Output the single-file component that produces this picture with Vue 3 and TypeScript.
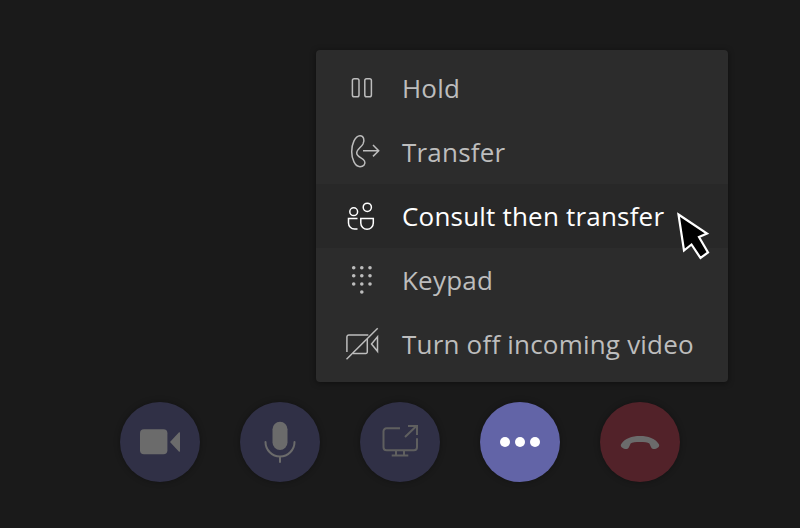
<script setup lang="ts">
const items = [
  { key: 'hold', label: 'Hold' },
  { key: 'transfer', label: 'Transfer' },
  { key: 'consult', label: 'Consult then transfer', active: true },
  { key: 'keypad', label: 'Keypad' },
  { key: 'video', label: 'Turn off incoming video' },
]
const dots: [number, number][] = [
  [11.7, 7.7], [19.8, 7.7], [28, 7.7],
  [11.7, 15.8], [19.8, 15.8], [28, 15.8],
  [11.7, 24], [19.8, 24], [28, 24],
  [19.8, 32],
]
</script>

<template>
  <div class="page">
    <div class="menu">
      <div v-for="it in items" :key="it.key" class="row" :class="{ active: it.active }">
        <svg class="icon" width="40" height="40" viewBox="0 0 40 40" fill="none" stroke="currentColor" stroke-width="1.5">
          <template v-if="it.key === 'hold'">
            <rect x="10.4" y="10.700" width="6.600" height="18" rx="1.800" />
            <rect x="22.800" y="10.700" width="6.600" height="18" rx="1.800" />
          </template>
          <template v-else-if="it.key === 'transfer'">
            <path d="M18 3.700C13 4 9.700 12 9.700 19.700 9.700 27 13 34.700 18 34.700 21.500 34.700 24 32 22.500 29 21 26 14.700 25 14.700 21 14.700 17 19 15.500 21 12 23 8 21.500 3.500 18 3.700z" />
            <path d="M21 18.700h15M31 13l5.700 5.700-5.700 5.700" />
          </template>
          <template v-else-if="it.key === 'consult'">
            <circle cx="11.700" cy="15.700" r="3.900" />
            <circle cx="25.300" cy="11.300" r="4.100" />
            <path d="M15.500 22.500H6.500V27a6 6 0 0 0 6 6h3" />
            <path d="M18.800 22.500h12.500V27a6.250 6.250 0 0 1-12.500 0z" />
          </template>
          <template v-else-if="it.key === 'keypad'">
            <circle v-for="(d, i) in dots" :key="i" :cx="d[0]" :cy="d[1]" r="1.800" fill="currentColor" stroke="none" />
          </template>
          <template v-else>
            <path d="M4.900 28V13a2 2 0 0 1 2-2h19.400M25.300 15v13a1.500 1.500 0 0 1-1.500 1.500H11" />
            <path d="M35.500 12.800v14.500L29.500 20z" />
            <path d="M4.500 35.200L35.700 4.300" />
          </template>
        </svg>
        <span class="label">{{ it.label }}</span>
      </div>
    </div>

    <svg class="cursor" width="38" height="50" viewBox="0 0 38 50">
      <path d="M3.500 3.500L32 22.500 24 26 33 41.500 25.500 47 16.500 33.500 9 39.500z" fill="#000" stroke="#fff" stroke-width="2.200" stroke-linejoin="miter" />
    </svg>

    <div class="controls">
      <button class="btn">
        <svg width="44" height="30" viewBox="0 0 44 30" fill="#6b6b6b">
          <rect x="2" y="2.300" width="27.400" height="25" rx="4" />
          <path d="M32 15l8.800-9.500a.7.700 0 0 1 1.200.5v18a.7.700 0 0 1-1.200.5z" />
        </svg>
      </button>
      <button class="btn">
        <svg width="36" height="44" viewBox="0 0 36 44" fill="none">
          <rect x="10.500" y="1.700" width="15" height="28.300" rx="7.500" fill="#6b6b6b" />
          <path d="M3.500 22a14.500 14.500 0 0 0 29 0M18 36.500v5.500" stroke="#6b6b6b" stroke-width="2" stroke-linecap="round" />
        </svg>
      </button>
      <button class="btn">
        <svg width="40" height="36" viewBox="0 0 40 36" fill="none" stroke="#5f5f5f" stroke-width="2">
          <path d="M20 4.300H6.500a3 3 0 0 0-3 3v16a3 3 0 0 0 3 3h27.500a3 3 0 0 0 3-3v-9" />
          <path d="M16 26v5.500M24 26v5.500M11.700 31.500h16.600" />
          <path d="M25 13L36.500 2M28 2h9v9" />
        </svg>
      </button>
      <button class="btn more">
        <span class="dot" /><span class="dot" /><span class="dot" />
      </button>
      <button class="btn end">
        <svg width="40" height="15" viewBox="0 0 42 16" fill="#6b6b6b">
          <path d="M1 9.500C5 3.500 12 1 21 1s16 2.500 20 8.500c.8 1.200.6 2.600-.4 3.500-1.500 1.300-3.400 2-5.300 2-1.600 0-2.300-1.400-3-3l-1.300-3c-3-2-17-2-20 0l-1.300 3c-.7 1.600-1.400 3-3 3-1.900 0-3.800-.7-5.300-2-1-.9-1.200-2.300-.4-3.500z" />
        </svg>
      </button>
    </div>
  </div>
</template>

<style scoped>
.page {
  position: relative;
  width: 800px;
  height: 528px;
  box-sizing: border-box;
  background: #1a1a1a;
  display: flex;
  flex-direction: column;
  justify-content: flex-end;
  align-items: center;
  padding-bottom: 46px;
  font-family: "Open Sans", "Noto Sans", sans-serif;
  overflow: hidden;
}
.menu {
  position: absolute;
  left: 316px;
  top: 50px;
  width: 412px;
  height: 332px;
  box-sizing: border-box;
  padding: 6px 0;
  background: #2c2c2c;
  border-radius: 4px;
  box-shadow: 0 1px 6px rgba(0, 0, 0, 0.45);
}
.row {
  height: 64px;
  display: flex;
  align-items: center;
  padding-left: 26px;
  gap: 20px;
  color: #bdbdbd;
}
.row.active {
  background: #282828;
  color: #fff;
}
.icon {
  flex: none;
}
.label {
  font-size: 26px;
  letter-spacing: 0.2px;
  line-height: 64px;
  white-space: nowrap;
}
.cursor {
  position: absolute;
  left: 675px;
  top: 211px;
}
.controls {
  display: flex;
  gap: 40px;
}
.btn {
  width: 80px;
  height: 80px;
  border: 0;
  padding: 0;
  border-radius: 50%;
  background: #303046;
  display: flex;
  align-items: center;
  justify-content: center;
  box-shadow: 0 0 6px rgba(0, 0, 0, 0.3);
}
.more {
  background: #6264a7;
  gap: 5px;
}
.end {
  background: #522229;
}
.dot {
  width: 10px;
  height: 10px;
  border-radius: 50%;
  background: #fff;
}
</style>
